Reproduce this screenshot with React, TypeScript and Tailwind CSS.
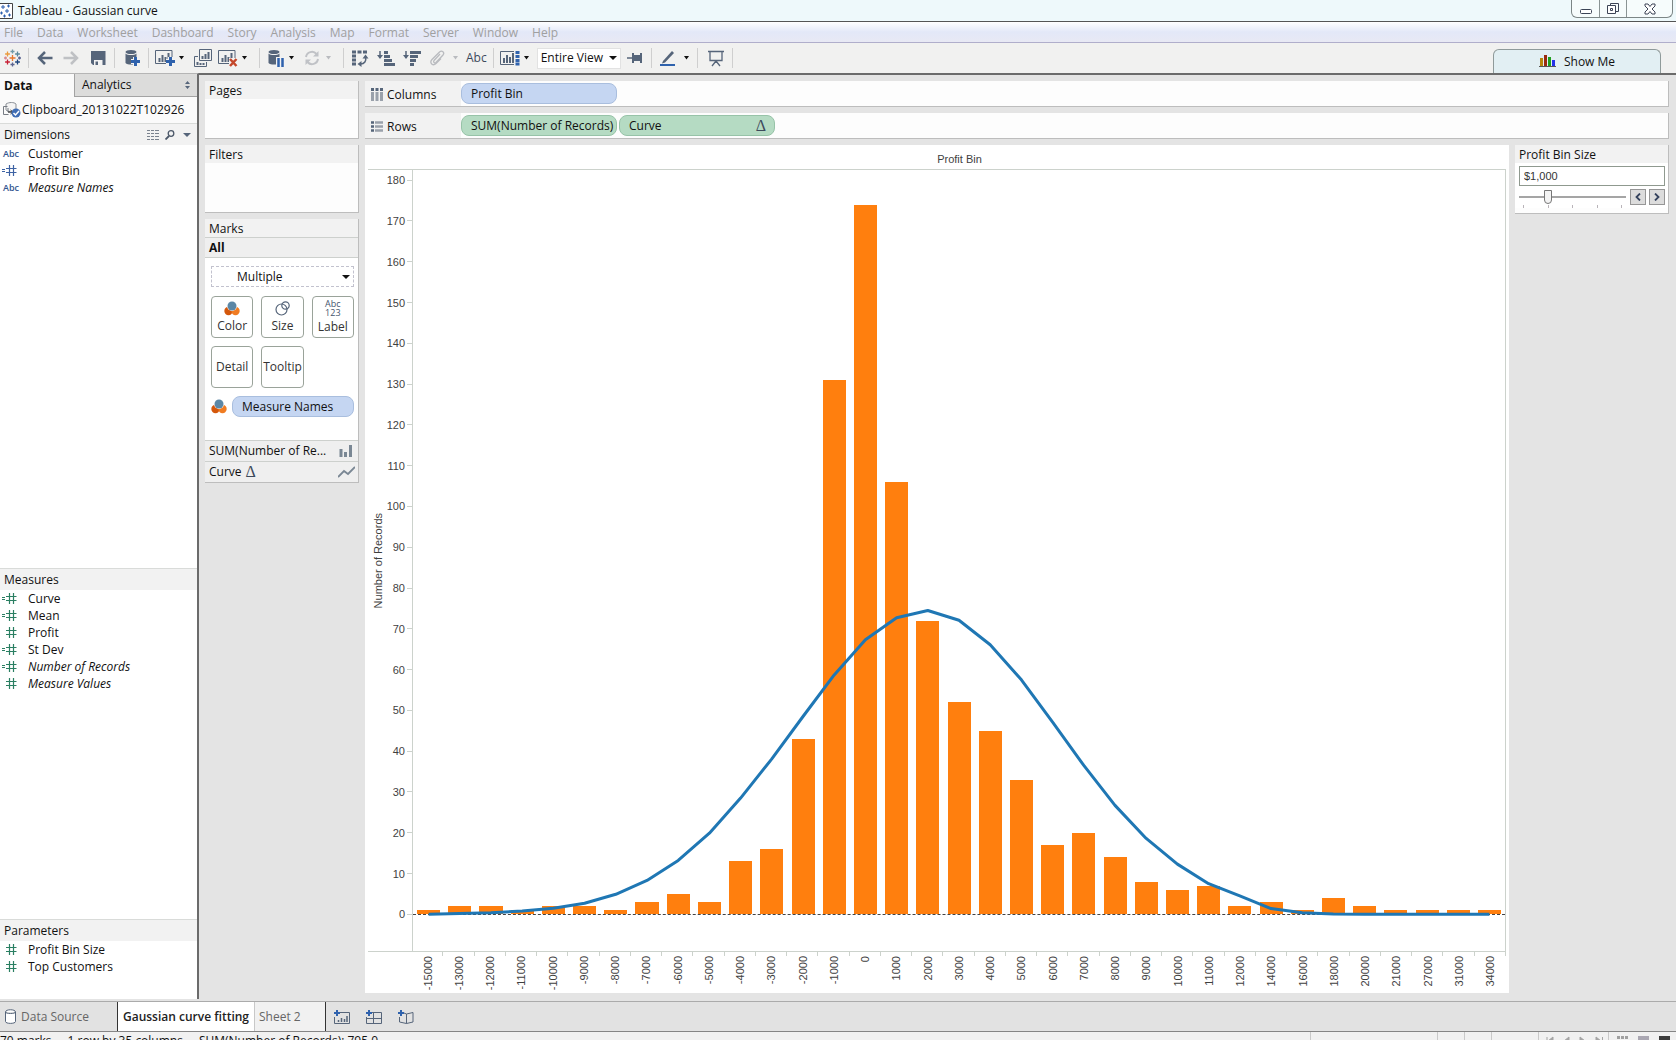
import type { ReactNode } from "react";
import { clsx } from "clsx";

const MENUS = [
  "File",
  "Data",
  "Worksheet",
  "Dashboard",
  "Story",
  "Analysis",
  "Map",
  "Format",
  "Server",
  "Window",
  "Help",
];

type Bin = { bin: number; count: number; curve: number };

const BINS: Bin[] = [
  { bin: -15000, count: 1, curve: 0 },
  { bin: -13000, count: 2, curve: 0.2 },
  { bin: -12000, count: 2, curve: 0.4 },
  { bin: -11000, count: 1, curve: 0.8 },
  { bin: -10000, count: 2, curve: 1.5 },
  { bin: -9000, count: 2, curve: 2.7 },
  { bin: -8000, count: 1, curve: 4.9 },
  { bin: -7000, count: 3, curve: 8.3 },
  { bin: -6000, count: 5, curve: 13.2 },
  { bin: -5000, count: 3, curve: 19.9 },
  { bin: -4000, count: 13, curve: 28.5 },
  { bin: -3000, count: 16, curve: 38.1 },
  { bin: -2000, count: 43, curve: 48.5 },
  { bin: -1000, count: 131, curve: 58.7 },
  { bin: 0, count: 174, curve: 67.3 },
  { bin: 1000, count: 106, curve: 72.7 },
  { bin: 2000, count: 72, curve: 74.5 },
  { bin: 3000, count: 52, curve: 72.1 },
  { bin: 4000, count: 45, curve: 66.1 },
  { bin: 5000, count: 33, curve: 57.5 },
  { bin: 6000, count: 17, curve: 47.1 },
  { bin: 7000, count: 20, curve: 36.5 },
  { bin: 8000, count: 14, curve: 26.7 },
  { bin: 9000, count: 8, curve: 18.6 },
  { bin: 10000, count: 6, curve: 12.3 },
  { bin: 11000, count: 7, curve: 7.5 },
  { bin: 12000, count: 2, curve: 4.5 },
  { bin: 14000, count: 3, curve: 1.4 },
  { bin: 16000, count: 1, curve: 0.4 },
  { bin: 18000, count: 4, curve: 0.1 },
  { bin: 20000, count: 2, curve: 0 },
  { bin: 21000, count: 1, curve: 0 },
  { bin: 27000, count: 1, curve: 0 },
  { bin: 31000, count: 1, curve: 0 },
  { bin: 34000, count: 1, curve: 0 },
];

// visible range of the value axis
const Y_MAX = 182.5;
const Y_MIN = -9;
const Y_SPAN = Y_MAX - Y_MIN;
const Y_TICKS = Array.from({ length: 19 }, (_, i) => i * 10);

const fromTop = (v: number) => `${((Y_MAX - v) / Y_SPAN) * 100}%`;

/* ---------- icons ---------- */

function Svg({ w, h = 18, children }: { w: number; h?: number; children: ReactNode }) {
  return (
    <svg width={w} height={h} viewBox={`0 0 ${w} ${h}`} fill="none" className="shrink-0" aria-hidden="true">
      {children}
    </svg>
  );
}

function Caret({ color = "#111111" }: { color?: string }) {
  return (
    <Svg w={5} h={4}>
      <path d="M0 0h5L2.5 3.5z" fill={color} />
    </Svg>
  );
}

function TableauMark() {
  const plus = (x: number, y: number, r: number, c: string) => (
    <path key={`${x}-${y}`} d={`M${x - r} ${y}h${2 * r}M${x} ${y - r}v${2 * r}`} stroke={c} strokeWidth="1.3" />
  );
  return (
    <Svg w={17}>
      {plus(8.5, 9, 3, "#e8762c")}
      {plus(8.5, 2.5, 2, "#7199a6")}
      {plus(8.5, 15.5, 2, "#5b6591")}
      {plus(3.5, 5, 2.4, "#eb9a3c")}
      {plus(13.5, 5, 2.4, "#59879b")}
      {plus(3.5, 13, 2.4, "#c72035")}
      {plus(13.5, 13, 2.4, "#1f457e")}
      {plus(1.5, 9, 1.5, "#d98a90")}
      {plus(15.5, 9, 1.5, "#5b6591")}
    </Svg>
  );
}

function WindowMark() {
  return (
    <Svg w={13} h={16}>
      <path d="M-1 .5h13.500v15H-1" fill="#ffffff" stroke="#444444" />
      <path
        d="M1 4h4M3 2v4M7 3h3M8.500 1.500v3M5 8h4M7 6v4M0 10h3M1.500 8.500v3M8 12h3M9.500 10.500v3M3 13h3M4.500 11.500v3"
        stroke="#2b5fae"
      />
    </Svg>
  );
}

function ArrowIcon({ dir, color }: { dir: "left" | "right"; color: string }) {
  return (
    <Svg w={16}>
      <path
        d={dir === "left" ? "M8 3L2 9l6 6M2.500 9H15.500" : "M8 3l6 6-6 6M13.500 9H.5"}
        stroke={color}
        strokeWidth="2.500"
      />
    </Svg>
  );
}

function SaveIcon() {
  return (
    <Svg w={15}>
      <path d="M0 2h14.500v14H2l-2-2z" fill="#56657a" />
      <path d="M3 11h8.500v5H3z" fill="#f3f3f3" />
      <path d="M4.500 12.500h2.500v3.500H4.500z" fill="#56657a" />
    </Svg>
  );
}

function Cylinder() {
  return (
    <>
      <ellipse cx="6" cy="3" rx="5.500" ry="2" fill="#56657a" />
      <path d="M.5 4.500c2 2 9 2 11 0V14c-2 2-9 2-11 0z" fill="#56657a" />
    </>
  );
}

function AddDataIcon() {
  return (
    <Svg w={15}>
      <Cylinder />
      <path d="M10.500 8v9M6 12.500h9" stroke="#f3f3f3" strokeWidth="5" />
      <path d="M10.500 8v9M6 12.500h9" stroke="#2f62ad" strokeWidth="3" />
    </Svg>
  );
}

function PauseDataIcon() {
  return (
    <Svg w={17}>
      <Cylinder />
      <path d="M8 8h9v10H8z" fill="#f3f3f3" />
      <path d="M10.500 9v9M14.500 9v9" stroke="#2f62ad" strokeWidth="2.500" />
    </Svg>
  );
}

function SheetFrame() {
  return (
    <>
      <path d="M.5 1.500h16.500v13H.5z" stroke="#56657a" />
      <path d="M4.500 13V9M7.500 13V6M10.500 13V8M13.500 13V4" stroke="#56657a" strokeWidth="2" />
    </>
  );
}

function NewSheetIcon() {
  return (
    <Svg w={20}>
      <SheetFrame />
      <path d="M15.500 8v9M11 12.500h9" stroke="#f3f3f3" strokeWidth="5" />
      <path d="M15.500 8v9M11 12.500h9" stroke="#2f62ad" strokeWidth="3" />
    </Svg>
  );
}

function ClearSheetIcon() {
  return (
    <Svg w={20}>
      <SheetFrame />
      <path d="M11 9h9v9h-9z" fill="#f3f3f3" />
      <path d="M12 10l6.500 7M18.500 10L12 17" stroke="#c4472b" strokeWidth="2.500" />
    </Svg>
  );
}

function DuplicateSheetIcon() {
  return (
    <Svg w={18}>
      <path d="M5.500 .5h12v11h-12z" stroke="#56657a" />
      <path d="M4 7.500H.5v10h12V13" stroke="#56657a" />
      <path d="M8.500 10V7M11.500 10V5M14.500 10V3M3.500 16v-3M6.500 16v-2M9.500 16v-2" stroke="#56657a" strokeWidth="2" />
    </Svg>
  );
}

function RefreshIcon() {
  return (
    <Svg w={16}>
      <path d="M2 8a6 6 0 0 1 10.500-3M14 10a6 6 0 0 1-10.500 3" stroke="#c0c2c6" strokeWidth="2" />
      <path d="M14.500 2v5.500H9zM1.500 16v-5.500H7z" fill="#c0c2c6" />
    </Svg>
  );
}

function SwapIcon() {
  return (
    <Svg w={17}>
      <path d="M0 3h4M5.500 3h4M11 3h4M0 7h4M0 11h4M0 15h4" stroke="#56657a" strokeWidth="3" />
      <path d="M13.500 8c1 4-1 7-5 7" stroke="#56657a" strokeWidth="1.500" />
      <path d="M10.500 9.500l3-4 3 4zM9.500 12l-4 3 4 3z" fill="#56657a" />
    </Svg>
  );
}

function SortIcon({ desc }: { desc?: boolean }) {
  return (
    <Svg w={18}>
      <path d="M3 2v7" stroke="#56657a" strokeWidth="1.500" />
      <path d="M0 6h6l-3 4z" fill="#56657a" />
      <path
        d={desc ? "M7 3.500h11M7 7.500h8M7 11.500h6M7 15.500h4" : "M7 3.500h4M7 7.500h6M7 11.500h8M7 15.500h11"}
        stroke="#56657a"
        strokeWidth="3"
      />
    </Svg>
  );
}

function ClipIcon() {
  return (
    <Svg w={16}>
      <path
        d="M11 5l-6 6.500c-1 1.500.5 3 2 2L14 6c2-2.500-1-5-3.500-3L3 10.500c-3 3.500 1 7 4 4l5-5"
        stroke="#b9bbbf"
        strokeWidth="1.300"
      />
    </Svg>
  );
}

function FitIcon() {
  return (
    <Svg w={20}>
      <path d="M14 2.500H.5v13H14" stroke="#56657a" />
      <path d="M4 14V9M7 14V6M10 14V8M13 14V4" stroke="#56657a" strokeWidth="2" />
      <path d="M15.500 3.500h4M15.500 7.500h4M15.500 11.500h4M15.500 15h4" stroke="#2f62ad" strokeWidth="3" />
    </Svg>
  );
}

function PinIcon() {
  return (
    <Svg w={16}>
      <path d="M0 9h6" stroke="#56657a" strokeWidth="1.500" />
      <path d="M5 4h2v2h6V4h2v10h-2v-2H7v2H5z" fill="#56657a" />
    </Svg>
  );
}

function PenIcon() {
  return (
    <Svg w={16}>
      <path d="M3 12L12 2l2 2-9 9.500-3 1z" fill="#56657a" />
      <path d="M0 16h15" stroke="#2f62ad" strokeWidth="2" />
    </Svg>
  );
}

function PresentIcon() {
  return (
    <Svg w={16}>
      <path d="M0 2.500h16M2 3v8.500h12V3M8 11.500V14M8 12l-4 5M8 12l4 5" stroke="#56657a" strokeWidth="1.300" />
    </Svg>
  );
}

function ShowMeIcon() {
  return (
    <Svg w={17} h={13}>
      <path d="M1 3h3v8H1z" fill="#b8860b" />
      <path d="M5 0h3v11H5z" fill="#9a2a10" />
      <path d="M9 2h3v9H9z" fill="#1fa01f" />
      <path d="M13 5h3v6h-3z" fill="#2433e8" />
      <path d="M0 11.500h17" stroke="#555555" />
    </Svg>
  );
}

function ColorIcon() {
  return (
    <Svg w={16} h={15}>
      <circle cx="4.500" cy="10" r="4.200" fill="#d4570b" />
      <circle cx="11.500" cy="10" r="4.200" fill="#f07c22" />
      <circle cx="8" cy="5" r="5" fill="#ffffff" />
      <circle cx="8" cy="5" r="4.500" fill="#5b87a6" />
    </Svg>
  );
}

function SizeIcon() {
  return (
    <Svg w={15} h={15}>
      <circle cx="6.500" cy="8.500" r="5.500" stroke="#56657a" strokeWidth="1.200" />
      <circle cx="10.500" cy="4.500" r="3.700" stroke="#56657a" strokeWidth="1.200" />
    </Svg>
  );
}

function HashIcon({ color, calc }: { color: string; calc?: boolean }) {
  return (
    <Svg w={15} h={11}>
      {calc && <path d="M0 4.500h3M0 6.500h3" stroke={color} />}
      <path d="M4 3.500h10.500M4 7.500h10.500M7.500 0v11M11.500 0v11" stroke={color} strokeWidth="1.200" />
    </Svg>
  );
}

/* ---------- header bars ---------- */

function TitleBar() {
  return (
    <header className="flex h-[22px] shrink-0 items-start justify-between border-b border-[#555555] bg-[#eef9fb] pr-[3px]">
      <div className="flex h-full items-center gap-[5px]">
        <WindowMark />
        <h1 className="font-normal">Tableau - Gaussian curve</h1>
      </div>
      <div className="flex h-[18px] rounded-b-md border border-t-0 border-[#7c8686] bg-[#f6fcfc]">
        <button type="button" aria-label="Minimize" className="flex w-7 items-center justify-center border-r border-[#8a9494]">
          <Svg w={12} h={14}>
            <rect x=".5" y="7.500" width="11" height="4" rx="1" fill="#ffffff" stroke="#3c4456" />
          </Svg>
        </button>
        <button type="button" aria-label="Restore" className="flex w-[27px] items-center justify-center border-r border-[#8a9494]">
          <Svg w={12} h={13}>
            <path d="M3.500 3V1.500h8v8H9" stroke="#3c4456" />
            <path d="M.5 3.500h8v8h-8zM3.500 6.500h2v2h-2z" fill="#ffffff" stroke="#3c4456" />
          </Svg>
        </button>
        <button type="button" aria-label="Close" className="flex w-[45px] items-center justify-center">
          <Svg w={12} h={12}>
            <path d="M1 1h3l2 2.500L8 1h3v2L8 6l3 3v2H8L6 8.500 4 11H1V9l3-3-3-3z" fill="#ffffff" stroke="#3c4456" />
          </Svg>
        </button>
      </div>
    </header>
  );
}

function MenuBar() {
  return (
    <nav className="flex h-[21px] shrink-0 items-end border-b border-[#b0aecb] bg-gradient-to-b from-white via-[#e3e8f8] to-[#e8e9f4]">
      <ul className="flex gap-3.5 px-1 leading-[18px] text-[#a0a0a0]">
        {MENUS.map((m) => (
          <li key={m}>
            <button type="button">{m}</button>
          </li>
        ))}
      </ul>
    </nav>
  );
}

function Tool({ label, className, children }: { label: string; className?: string; children: ReactNode }) {
  return (
    <button type="button" aria-label={label} className={clsx("flex shrink-0 items-center", className)}>
      {children}
    </button>
  );
}

function Sep({ className }: { className?: string }) {
  return <span className={clsx("h-5 w-px shrink-0 bg-[#cfcfcf]", className)} />;
}

function Toolbar() {
  return (
    <div className="flex h-[30px] shrink-0 items-center justify-between bg-[#f1f1f0] pr-[15px] pl-1">
      <div className="flex items-center">
        <Tool label="Start page">
          <TableauMark />
        </Tool>
        <Sep className="ml-[7px]" />
        <Tool label="Undo" className="ml-2">
          <ArrowIcon dir="left" color="#56657a" />
        </Tool>
        <Tool label="Redo" className="ml-2.5">
          <ArrowIcon dir="right" color="#bfc1c4" />
        </Tool>
        <Tool label="Save" className="ml-3">
          <SaveIcon />
        </Tool>
        <Sep className="ml-2" />
        <Tool label="New data source" className="ml-2.5">
          <AddDataIcon />
        </Tool>
        <Sep className="ml-2" />
        <Tool label="New worksheet" className="ml-1.5 gap-1">
          <NewSheetIcon />
          <Caret />
        </Tool>
        <Tool label="Duplicate sheet" className="ml-2.5">
          <DuplicateSheetIcon />
        </Tool>
        <Tool label="Clear sheet" className="ml-1.5 gap-1">
          <ClearSheetIcon />
          <Caret />
        </Tool>
        <Sep className="ml-3" />
        <Tool label="Pause auto updates" className="ml-2 gap-1">
          <PauseDataIcon />
          <Caret />
        </Tool>
        <Tool label="Run update" className="ml-2.5 gap-1.5">
          <RefreshIcon />
          <Caret color="#b9bbbf" />
        </Tool>
        <Sep className="ml-3" />
        <Tool label="Swap rows and columns" className="ml-2">
          <SwapIcon />
        </Tool>
        <Tool label="Sort ascending" className="ml-2">
          <SortIcon />
        </Tool>
        <Tool label="Sort descending" className="ml-2">
          <SortIcon desc />
        </Tool>
        <Tool label="Group members" className="ml-2 gap-2">
          <ClipIcon />
          <Caret color="#b9bbbf" />
        </Tool>
        <Tool label="Show mark labels" className="ml-2 text-[#3d4a5c]">
          Abc
        </Tool>
        <Sep className="ml-1.5" />
        <Tool label="Show or hide cards" className="ml-1.5 gap-1">
          <FitIcon />
          <Caret />
        </Tool>
        <div className="relative ml-2 flex items-center">
          <select
            aria-label="Fit"
            className="h-[21px] w-[84px] appearance-none border border-[#e2e2e2] bg-white pl-[3px]"
            defaultValue="Entire View"
          >
            <option>Standard</option>
            <option>Fit Width</option>
            <option>Fit Height</option>
            <option>Entire View</option>
          </select>
          <span className="pointer-events-none absolute right-1">
            <Svg w={8} h={4}>
              <path d="M0 0h8L4 4z" fill="#111111" />
            </Svg>
          </span>
        </div>
        <Tool label="Fix axes" className="ml-1.5">
          <PinIcon />
        </Tool>
        <Sep className="ml-2" />
        <Tool label="Highlight" className="ml-2 gap-2">
          <PenIcon />
          <Caret />
        </Tool>
        <Sep className="ml-2" />
        <Tool label="Presentation mode" className="ml-2.5">
          <PresentIcon />
        </Tool>
        <Sep className="ml-2" />
      </div>
      <button
        type="button"
        className="flex h-6 w-[168px] items-center justify-center gap-2 self-end rounded-t-md border border-b-0 border-[#8f9a9a] bg-[#e2eff3]"
      >
        <ShowMeIcon />
        Show Me
      </button>
    </div>
  );
}

/* ---------- data pane ---------- */

type Field = { name: string; icon: "abc" | "hash" | "calc"; italic?: boolean };

const DIMENSIONS: Field[] = [
  { name: "Customer", icon: "abc" },
  { name: "Profit Bin", icon: "calc" },
  { name: "Measure Names", icon: "abc", italic: true },
];

const MEASURES: Field[] = [
  { name: "Curve", icon: "calc" },
  { name: "Mean", icon: "calc" },
  { name: "Profit", icon: "hash" },
  { name: "St Dev", icon: "calc" },
  { name: "Number of Records", icon: "calc", italic: true },
  { name: "Measure Values", icon: "hash", italic: true },
];

const PARAMETERS: Field[] = [
  { name: "Profit Bin Size", icon: "hash" },
  { name: "Top Customers", icon: "hash" },
];

function FieldList({ fields, color, className }: { fields: Field[]; color: string; className: string }) {
  return (
    <ul className={clsx("overflow-hidden", className)}>
      {fields.map((f) => (
        <li key={f.name} className="flex h-[17px] items-center">
          <span className="flex w-7 shrink-0 items-center pl-0.5 text-[9px] font-semibold text-[#33558f]">
            {f.icon === "abc" ? <span className="pl-px">Abc</span> : <HashIcon color={color} calc={f.icon === "calc"} />}
          </span>
          <span className={clsx(f.italic && "italic")}>{f.name}</span>
        </li>
      ))}
    </ul>
  );
}

function PaneHeader({ title, children }: { title: string; children?: ReactNode }) {
  return (
    <div className="flex h-[22px] shrink-0 items-center justify-between border-t border-[#d9dbd9] bg-[#f2f2f2] pr-1.5 pl-1">
      <h2 className="font-normal">{title}</h2>
      {children}
    </div>
  );
}

function DataPane() {
  return (
    <aside className="mb-0.5 flex w-[199px] shrink-0 flex-col border-t border-r-2 border-t-[#b5b5b5] border-r-[#6b6b6b] bg-white">
      <div role="tablist" className="flex h-[23px] shrink-0">
        <button type="button" role="tab" aria-selected="true" className="w-[74px] bg-[#fafafa] pl-1 text-left font-bold">
          Data
        </button>
        <button
          type="button"
          role="tab"
          aria-selected="false"
          className="flex flex-1 items-center justify-between border-b border-l border-[#a3a3a3] bg-[#dcdcdb] pr-1.5 pl-[7px]"
        >
          Analytics
          <Svg w={7} h={8}>
            <path d="M3.500 0L6 3H1zM3.500 8L1 5h5z" fill="#56657a" />
          </Svg>
        </button>
      </div>
      <div className="flex h-[26px] shrink-0 items-center gap-px bg-[#fafafa] pl-[3px]">
        <Svg w={18} h={16}>
          <path d="M3 2c3-2 8-2 10 0v6c-2 2-8 2-10 0z" fill="#f4f4f4" stroke="#8a8f96" />
          <path d="M.5 4.500h4M.5 4.500v8h5M5 6v4h5" stroke="#777c84" />
          <path d="M5 10h4M7.500 8l2.500 2-2.500 2" stroke="#333333" />
          <circle cx="13" cy="11" r="4.500" fill="#3f6db5" />
          <path d="M10.500 11l2 2 3.500-4" stroke="#ffffff" strokeWidth="1.500" />
        </Svg>
        <span>Clipboard_20131022T102926</span>
      </div>
      <PaneHeader title="Dimensions">
        <div className="flex items-center gap-1.5">
          <button type="button" aria-label="View data">
            <Svg w={12} h={10}>
              <path
                d="M0 .5h3M4 .5h3M8 .5h4M0 3.500h3M4 3.500h3M8 3.500h4M0 6.500h3M4 6.500h3M8 6.500h4M0 9.500h3M4 9.500h3M8 9.500h4"
                stroke="#7a828e"
              />
            </Svg>
          </button>
          <button type="button" aria-label="Find field">
            <Svg w={10} h={10}>
              <circle cx="6" cy="3.500" r="2.800" stroke="#4b5768" strokeWidth="1.300" />
              <path d="M4 6L.5 9.500" stroke="#4b5768" strokeWidth="1.800" />
            </Svg>
          </button>
          <button type="button" aria-label="Pane menu" className="pl-0.5">
            <Svg w={8} h={4}>
              <path d="M0 0h8L4 4z" fill="#56657a" />
            </Svg>
          </button>
        </div>
      </PaneHeader>
      <FieldList fields={DIMENSIONS} color="#3d62a3" className="flex-[9]" />
      <PaneHeader title="Measures" />
      <FieldList fields={MEASURES} color="#2a7f62" className="flex-[7]" />
      <PaneHeader title="Parameters" />
      <FieldList fields={PARAMETERS} color="#2a7f62" className="h-[58px] shrink-0" />
    </aside>
  );
}

/* ---------- cards ---------- */

function Card({ title, className, children }: { title: string; className?: string; children?: ReactNode }) {
  return (
    <section className={clsx("border-r border-b border-[#bdbdbd] bg-[#fdfdfd]", className)}>
      <h2 className="h-[18px] bg-[#f2f2f2] pl-1 leading-5 font-normal">{title}</h2>
      {children}
    </section>
  );
}

function MarkButton({ label, children }: { label: string; children?: ReactNode }) {
  return (
    <button
      type="button"
      className="flex h-[42px] flex-col items-center justify-center gap-0.5 rounded border border-[#9aa39a] bg-white leading-4 text-[#333333]"
    >
      {children}
      {label}
    </button>
  );
}

function Delta() {
  return <span className="font-['Liberation_Serif',serif] text-base leading-4 text-[#3d4a5c]">Δ</span>;
}

function MarksCard() {
  return (
    <Card title="Marks">
      <h3 className="h-[21px] border-y border-[#cdd0cd] bg-[#efefef] pl-1 leading-5 font-bold">All</h3>
      <div className="flex flex-col gap-2 bg-white pt-2 pr-1 pb-[23px] pl-1.5">
        <div className="relative mb-px flex items-center">
          <select
            aria-label="Mark type"
            className="h-[21px] w-full appearance-none border border-dashed border-[#c2c2ce] bg-white pl-[25px]"
            defaultValue="Multiple"
          >
            <option>Multiple</option>
            <option>Bar</option>
            <option>Line</option>
          </select>
          <span className="pointer-events-none absolute right-1">
            <Svg w={8} h={4}>
              <path d="M0 0h8L4 4z" fill="#111111" />
            </Svg>
          </span>
        </div>
        <div className="grid grid-cols-3 gap-2">
          <MarkButton label="Color">
            <ColorIcon />
          </MarkButton>
          <MarkButton label="Size">
            <SizeIcon />
          </MarkButton>
          <MarkButton label="Label">
            <span className="flex flex-col text-center text-[9px] leading-[9px] text-[#45566e]">
              <span>Abc</span>
              <span>123</span>
            </span>
          </MarkButton>
          <MarkButton label="Detail" />
          <MarkButton label="Tooltip" />
        </div>
        <div className="flex items-center gap-[5px]">
          <ColorIcon />
          <button type="button" className="h-[21px] flex-1 rounded-lg border border-[#a9bede] bg-[#c5d6f2] pl-[9px] text-left">
            Measure Names
          </button>
        </div>
      </div>
      <button type="button" className="flex h-[21px] w-full items-center justify-between border-t border-[#cdd0cd] bg-[#efefef] pr-1.5 pl-1">
        SUM(Number of Re...
        <Svg w={13} h={12}>
          <path d="M2 12V4M6.500 12V7M11.500 12V0" stroke="#7a8794" strokeWidth="3" />
        </Svg>
      </button>
      <button type="button" className="flex h-[21px] w-full items-center justify-between border-t border-[#cdd0cd] bg-[#efefef] pr-[3px] pl-1">
        <span className="flex items-center gap-1">
          Curve
          <Delta />
        </span>
        <Svg w={17} h={12}>
          <path d="M0 11l6-6 4 3 7-7" stroke="#7a8794" strokeWidth="1.800" />
        </Svg>
      </button>
    </Card>
  );
}

function Shelf({ label, icon, children }: { label: string; icon: ReactNode; children: ReactNode }) {
  return (
    <section className="flex h-[26px] shrink-0 border-r border-b border-[#bdbdbd] bg-[#fdfdfd]">
      <h2 className="flex w-24 items-center gap-1 bg-[#f2f2f2] pt-0.5 pl-1.5 leading-5 font-normal">
        {icon}
        {label}
      </h2>
      <div className="flex items-center gap-0.5">{children}</div>
    </section>
  );
}

function GreenPill({ label, badge }: { label: string; badge?: ReactNode }) {
  return (
    <button
      type="button"
      className="flex h-[21px] w-[156px] items-center justify-between rounded-lg border border-[#97c3a8] bg-[#b5dbc3] pr-2 pl-[9px] whitespace-nowrap"
    >
      {label}
      {badge}
    </button>
  );
}

/* ---------- chart ---------- */

function Chart() {
  const points = BINS.map((b, i) => `${i + 0.5},${Y_MAX - b.curve}`).join(" ");

  return (
    <figure className="flex min-w-0 flex-1 flex-col bg-white pr-[3px] pl-[3px] font-['Liberation_Sans',Arial,sans-serif] text-[11px] text-[#3f3f3f]">
      <figcaption className="h-[25px] shrink-0 border-b border-[#ccd2cc] pt-0.5 pl-[45px] text-center leading-6">
        Profit Bin
      </figcaption>
      <div className="flex min-h-0 flex-1">
        <div className="flex w-5 shrink-0 items-center justify-center">
          <span className="rotate-180 whitespace-nowrap [writing-mode:vertical-rl]">Number of Records</span>
        </div>
        <div className="relative w-[25px] shrink-0 border-r border-[#ccd2cc]">
          {Y_TICKS.map((t) => (
            <div
              key={t}
              className="absolute right-0 flex -translate-y-1/2 items-center gap-0.5 leading-3"
              style={{ top: fromTop(t) }}
            >
              {t}
              <span className="h-px w-[5px] bg-[#ccd2cc]" />
            </div>
          ))}
        </div>
        <div className="relative flex min-w-0 flex-1 border-r border-[#ccd2cc]">
          {BINS.map((b) => (
            <div key={b.bin} className="flex min-w-0 flex-1 flex-col items-center justify-end">
              <div className="w-[74%] bg-[#ff7f0e]" style={{ height: `${(b.count / Y_SPAN) * 100}%` }} />
              <div className="shrink-0" style={{ height: `${(-Y_MIN / Y_SPAN) * 100}%` }} />
            </div>
          ))}
          <div className="absolute inset-x-0 border-t border-dashed border-[#444444]" style={{ top: fromTop(0) }} />
          <svg
            className="absolute inset-0 h-full w-full"
            viewBox={`0 0 ${BINS.length} ${Y_SPAN}`}
            preserveAspectRatio="none"
            role="img"
            aria-label="Gaussian curve"
          >
            <polyline
              points={points}
              fill="none"
              stroke="#1f77b4"
              strokeWidth="3"
              strokeLinejoin="round"
              vectorEffect="non-scaling-stroke"
            />
          </svg>
        </div>
      </div>
      <div className="flex h-[42px] shrink-0 border-t border-[#ccd2cc] pl-11">
        {BINS.map((b) => (
          <div key={b.bin} className="relative flex min-w-0 flex-1 items-start justify-center pt-1">
            <span className="absolute top-0 right-0 h-1 w-px bg-[#ccd2cc]" />
            <span className="rotate-180 leading-3 [writing-mode:vertical-rl]">{b.bin}</span>
          </div>
        ))}
      </div>
    </figure>
  );
}

function ParameterCard() {
  return (
    <Card title="Profit Bin Size" className="h-[69px] w-[154px] shrink-0">
      <div className="bg-white pt-[3px] pr-[3px] pl-1">
        <input
          aria-label="Profit Bin Size"
          defaultValue="$1,000"
          className="block h-5 w-full border border-[#8f998f] bg-white px-1 font-['Liberation_Sans',Arial,sans-serif] text-[11px] text-[#333333]"
        />
        <div className="flex pt-[3px]">
          <div className="flex w-[107px] flex-col">
            <input
              type="range"
              aria-label="Profit Bin Size slider"
              min={0}
              max={100}
              defaultValue={25}
              className="h-4 w-full appearance-none bg-transparent [&::-webkit-slider-runnable-track]:h-0.5 [&::-webkit-slider-runnable-track]:bg-[#a5a5a5] [&::-webkit-slider-thumb]:-mt-1.5 [&::-webkit-slider-thumb]:h-[14px] [&::-webkit-slider-thumb]:w-2 [&::-webkit-slider-thumb]:appearance-none [&::-webkit-slider-thumb]:rounded-t-sm [&::-webkit-slider-thumb]:rounded-b-full [&::-webkit-slider-thumb]:border [&::-webkit-slider-thumb]:border-[#777777] [&::-webkit-slider-thumb]:bg-[#f4f4f4]"
            />
            <div className="flex justify-between px-1">
              {[0, 1, 2, 3, 4].map((n) => (
                <span key={n} className="h-[3px] w-px bg-[#b9b4b9]" />
              ))}
            </div>
          </div>
          <div className="flex flex-1 justify-end gap-[3px]">
            <button type="button" aria-label="Decrease" className="flex size-4 items-center justify-center border border-[#969696] bg-[#dcdcdc]">
              <Svg w={6} h={8}>
                <path d="M5 .5L1.500 4 5 7.500" stroke="#33415c" strokeWidth="1.800" />
              </Svg>
            </button>
            <button type="button" aria-label="Increase" className="flex size-4 items-center justify-center border border-[#969696] bg-[#dcdcdc]">
              <Svg w={6} h={8}>
                <path d="M1 .5L4.500 4 1 7.500" stroke="#33415c" strokeWidth="1.800" />
              </Svg>
            </button>
          </div>
        </div>
      </div>
    </Card>
  );
}

/* ---------- bottom ---------- */

function SheetTabs() {
  return (
    <div className="flex h-[31px] shrink-0 border-y border-t-[#ababab] border-b-[#858585] bg-[#e2e2e2] text-[#666666]">
      <button type="button" className="flex w-[118px] items-center gap-[5px] border-r border-[#333333] pl-[5px]">
        <Svg w={11} h={15}>
          <path d="M.5 3c0-3 10-3 10 0v9.500c0 2.500-10 2.500-10 0zM.5 3c0 2 10 2 10 0" fill="#ffffff" stroke="#56657a" />
        </Svg>
        Data Source
      </button>
      <button type="button" className="w-[136px] bg-white text-center font-semibold whitespace-nowrap text-[#222222]">
        Gaussian curve fitting
      </button>
      <button type="button" className="w-[72px] border-r border-l border-r-[#333333] border-l-[#c8c8c8] bg-[#f1f1f1] pl-1 text-left">
        Sheet 2
      </button>
      <div className="flex items-center gap-4 pl-2">
        <button type="button" aria-label="New worksheet tab">
          <Svg w={16} h={14}>
            <path d="M6 2.500h9.500v11H.5V7" stroke="#56657a" />
            <path d="M4.500 12v-2M7.500 12V8M10.500 12v-3M13 12V6" stroke="#56657a" strokeWidth="1.500" />
            <path d="M3 0v6M0 3h6" stroke="#2f62ad" strokeWidth="2" />
          </Svg>
        </button>
        <button type="button" aria-label="New dashboard tab">
          <Svg w={16} h={14}>
            <path d="M6 2.500h9.500v11H.5V7M1 8.500h14.500M7.500 3v10" stroke="#56657a" />
            <path d="M3 0v6M0 3h6" stroke="#2f62ad" strokeWidth="2" />
          </Svg>
        </button>
        <button type="button" aria-label="New story tab">
          <Svg w={16} h={14}>
            <path d="M1.500 7v5l7 1.500V4L6 3M8.500 4l6.500-1.500V12l-6.500 1.500" stroke="#56657a" />
            <path d="M3 0v6M0 3h6" stroke="#2f62ad" strokeWidth="2" />
          </Svg>
        </button>
      </div>
    </div>
  );
}

function StatusBar() {
  return (
    <footer className="flex h-2 shrink-0 items-start justify-between overflow-hidden bg-[#f1f1f1]">
      <div className="flex gap-4 leading-[18px]">
        <span>70 marks</span>
        <span>1 row by 35 columns</span>
        <span>SUM(Number of Records): 795.0</span>
      </div>
      <div className="flex h-[18px] items-center pr-1">
        <span className="h-full w-[127px] border-l border-[#c9c9c9]" />
        <span className="h-full w-[27px] border-l border-[#c9c9c9]" />
        <span className="h-full w-[27px] border-l border-[#c9c9c9]" />
        <span className="h-full w-[47px] border-l border-[#c9c9c9]" />
        <Svg w={71} h={18}>
          <path d="M.5 0v18M70.500 0v18" stroke="#c9c9c9" />
          <path d="M9 5v8M15 5l-5 4 5 4zM31 5l-5 4 5 4zM42 5l5 4-5 4zM58 5l5 4-5 4zM64.500 5v8" fill="#a5a5a5" stroke="#a5a5a5" />
        </Svg>
        <Svg w={63} h={18}>
          <path d="M8 4h3v3H8zM12 4h3v3h-3zM16 4h3v3h-3zM8 8h11v3H8z" fill="#a0a0a0" />
          <path d="M29 4h11v8H29z" fill="#aaa7b2" />
          <path d="M50 4h11v8H50z" fill="#3b3b3b" />
        </Svg>
      </div>
    </footer>
  );
}

export default function App() {
  return (
    <div className="flex h-screen flex-col overflow-hidden bg-[#e4e4e4] font-['Open_Sans','Noto_Sans',sans-serif] text-xs text-[#111111]">
      <TitleBar />
      <MenuBar />
      <Toolbar />
      <div className="flex min-h-0 flex-1">
        <DataPane />
        <main className="flex min-w-0 flex-1 gap-1.5 border-t-2 border-[#6b6b6b] pt-1.5 pr-[7px] pb-2 pl-1.5">
          <div className="flex w-[154px] shrink-0 flex-col gap-1.5">
            <Card title="Pages" className="h-[58px]" />
            <Card title="Filters" className="h-[68px]" />
            <MarksCard />
          </div>
          <div className="flex min-w-0 flex-1 flex-col gap-1.5">
            <Shelf
              label="Columns"
              icon={
                <Svg w={12} h={13}>
                  <path d="M0 1.500h3M4.500 1.500h3M9 1.500h3" stroke="#56657a" strokeWidth="3" />
                  <path d="M1.500 4v9M6 4v9M10.500 4v9" stroke="#9aa1ab" strokeWidth="3" />
                </Svg>
              }
            >
              <button type="button" className="h-[21px] w-[156px] rounded-lg border border-[#a9bede] bg-[#c5d6f2] px-[9px] text-left">
                Profit Bin
              </button>
            </Shelf>
            <Shelf
              label="Rows"
              icon={
                <Svg w={12} h={12}>
                  <path d="M0 1.500h3M0 5.500h3M0 9.500h3" stroke="#56657a" strokeWidth="2.500" />
                  <path d="M4 1.500h8M4 5.500h8M4 9.500h8" stroke="#9aa1ab" strokeWidth="2.500" />
                </Svg>
              }
            >
              <GreenPill label="SUM(Number of Records)" />
              <GreenPill label="Curve" badge={<Delta />} />
            </Shelf>
            <div className="flex min-h-0 flex-1 gap-1.5">
              <Chart />
              <ParameterCard />
            </div>
          </div>
        </main>
      </div>
      <SheetTabs />
      <StatusBar />
    </div>
  );
}
